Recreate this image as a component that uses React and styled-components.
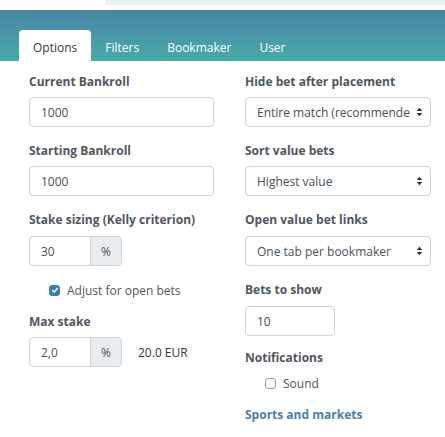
import React from "react";
import styled, { createGlobalStyle } from "styled-components";

const Global = createGlobalStyle`
  body {
    margin: 0;
    background: #fff;
    font-family: "Open Sans", "Liberation Sans", sans-serif;
    color: #495057;
  }
`;

const Page = styled.div`
  width: 445px;
  height: 437px;
  overflow: hidden;
`;

const TopStrip = styled.div`
  height: 10px;
  display: flex;
`;

const SearchEdge = styled.div`
  margin-left: 105px;
  flex: 1;
  height: 5px;
  background: #edf1f6;
`;

const Header = styled.div`
  height: 51px;
  border-top: 1px solid #437f9b;
  box-sizing: border-box;
  background: linear-gradient(180deg, #4886a4 0%, #4a97a9 50%, #46aba7 100%);
  display: flex;
  align-items: flex-end;
  padding-left: 19px;
`;

const Tab = styled.div`
  height: 31px;
  box-sizing: border-box;
  padding: 3px 14px 0;
  display: flex;
  align-items: center;
  font-size: 12px;
  border-radius: 4px 4px 0 0;
  background: ${(p) => (p.$active ? "#fff" : "transparent")};
  color: ${(p) => (p.$active ? "#343a40" : "#fff")};
`;

const Body = styled.div`
  display: flex;
  padding: 12px 0 0 29px;
  gap: 31px;
`;

const Column = styled.div`
  width: ${(p) => p.$w}px;
  display: flex;
  flex-direction: column;
`;

const Field = styled.div`
  margin-bottom: ${(p) => (p.$mb !== undefined ? p.$mb : 15)}px;
`;

const Label = styled.div`
  font-size: 12px;
  font-weight: 700;
  line-height: 18px;
  color: #50565d;
  margin-bottom: ${(p) => (p.$mb !== undefined ? p.$mb : 6)}px;
`;

const LinkLabel = styled(Label)`
  color: #4a7fa7;
`;

const TextInput = styled.div`
  box-sizing: border-box;
  width: ${(p) => (p.$w ? `${p.$w}px` : "100%")};
  height: 30px;
  border: 1px solid #ced4da;
  border-radius: 4px;
  padding: 0 11px;
  display: flex;
  align-items: center;
  font-size: 12px;
  color: #495057;
`;

const Select = styled(TextInput)`
  justify-content: space-between;
  padding-right: 7px;
  white-space: nowrap;
  overflow: hidden;
`;

const Group = styled.div`
  display: flex;
  align-items: center;
`;

const GroupBox = styled.div`
  display: flex;
  width: 93px;
  height: 30px;
  box-sizing: border-box;
  border: 1px solid #ced4da;
  border-radius: 4px;
  overflow: hidden;
  font-size: 12px;
`;

const GroupInput = styled.div`
  flex: 1;
  display: flex;
  align-items: center;
  padding-left: 11px;
  color: #495057;
`;

const Addon = styled.div`
  width: 30px;
  border-left: 1px solid #ced4da;
  background: #e9ecef;
  display: flex;
  align-items: center;
  justify-content: center;
  color: #495057;
`;

const After = styled.span`
  margin-left: 16px;
  font-size: 12px;
  color: #343a40;
`;

const CheckRow = styled.label`
  display: flex;
  align-items: center;
  height: 18px;
  padding-left: 20px;
  font-size: 12px;
  color: #50565d;
  margin-bottom: ${(p) => p.$mb}px;
`;

const Box = styled.span`
  width: 11px;
  height: 11px;
  box-sizing: border-box;
  border-radius: 3px;
  margin-right: 7px;
  display: flex;
  align-items: center;
  justify-content: center;
  background: ${(p) => (p.$on ? "#3b7ea7" : "#fff")};
  border: 1px solid ${(p) => (p.$on ? "#3b7ea7" : "#9aa0a6")};
`;

const Arrows = () => (
  <svg width="7" height="10" viewBox="0 0 7 10">
    <path d="M0.5 4 L3.5 0.8 L6.5 4 Z" fill="#343a40" />
    <path d="M0.5 6 L3.5 9.2 L6.5 6 Z" fill="#343a40" />
  </svg>
);

const Check = ({ on }) => (
  <Box $on={on}>
    {on && (
      <svg width="8" height="8" viewBox="0 0 8 8">
        <path d="M1.3 4.2 L3.2 6 L6.7 2" stroke="#fff" strokeWidth="1.5" fill="none" />
      </svg>
    )}
  </Box>
);

export default function App() {
  return (
    <Page>
      <Global />
      <TopStrip>
        <SearchEdge />
      </TopStrip>
      <Header>
        <Tab $active>Options</Tab>
        <Tab>Filters</Tab>
        <Tab>Bookmaker</Tab>
        <Tab>User</Tab>
      </Header>
      <Body>
        <Column $w={185}>
          <Field>
            <Label>Current Bankroll</Label>
            <TextInput>1000</TextInput>
          </Field>
          <Field>
            <Label>Starting Bankroll</Label>
            <TextInput>1000</TextInput>
          </Field>
          <Field>
            <Label $mb={7}>Stake sizing (Kelly criterion)</Label>
            <GroupBox>
              <GroupInput>30</GroupInput>
              <Addon>%</Addon>
            </GroupBox>
          </Field>
          <CheckRow $mb={14}>
            <Check on />
            Adjust for open bets
          </CheckRow>
          <Field>
            <Label>Max stake</Label>
            <Group>
              <GroupBox>
                <GroupInput>2,0</GroupInput>
                <Addon>%</Addon>
              </GroupBox>
              <After>20.0 EUR</After>
            </Group>
          </Field>
        </Column>
        <Column $w={186}>
          <Field>
            <Label>Hide bet after placement</Label>
            <Select>
              <span>Entire match (recommende</span>
              <Arrows />
            </Select>
          </Field>
          <Field>
            <Label>Sort value bets</Label>
            <Select>
              <span>Highest value</span>
              <Arrows />
            </Select>
          </Field>
          <Field>
            <Label $mb={7}>Open value bet links</Label>
            <Select>
              <span>One tab per bookmaker</span>
              <Arrows />
            </Select>
          </Field>
          <Field $mb={13}>
            <Label $mb={7}>Bets to show</Label>
            <TextInput $w={90}>10</TextInput>
          </Field>
          <Label $mb={7}>Notifications</Label>
          <CheckRow $mb={14}>
            <Check />
            Sound
          </CheckRow>
          <LinkLabel>Sports and markets</LinkLabel>
        </Column>
      </Body>
    </Page>
  );
}
